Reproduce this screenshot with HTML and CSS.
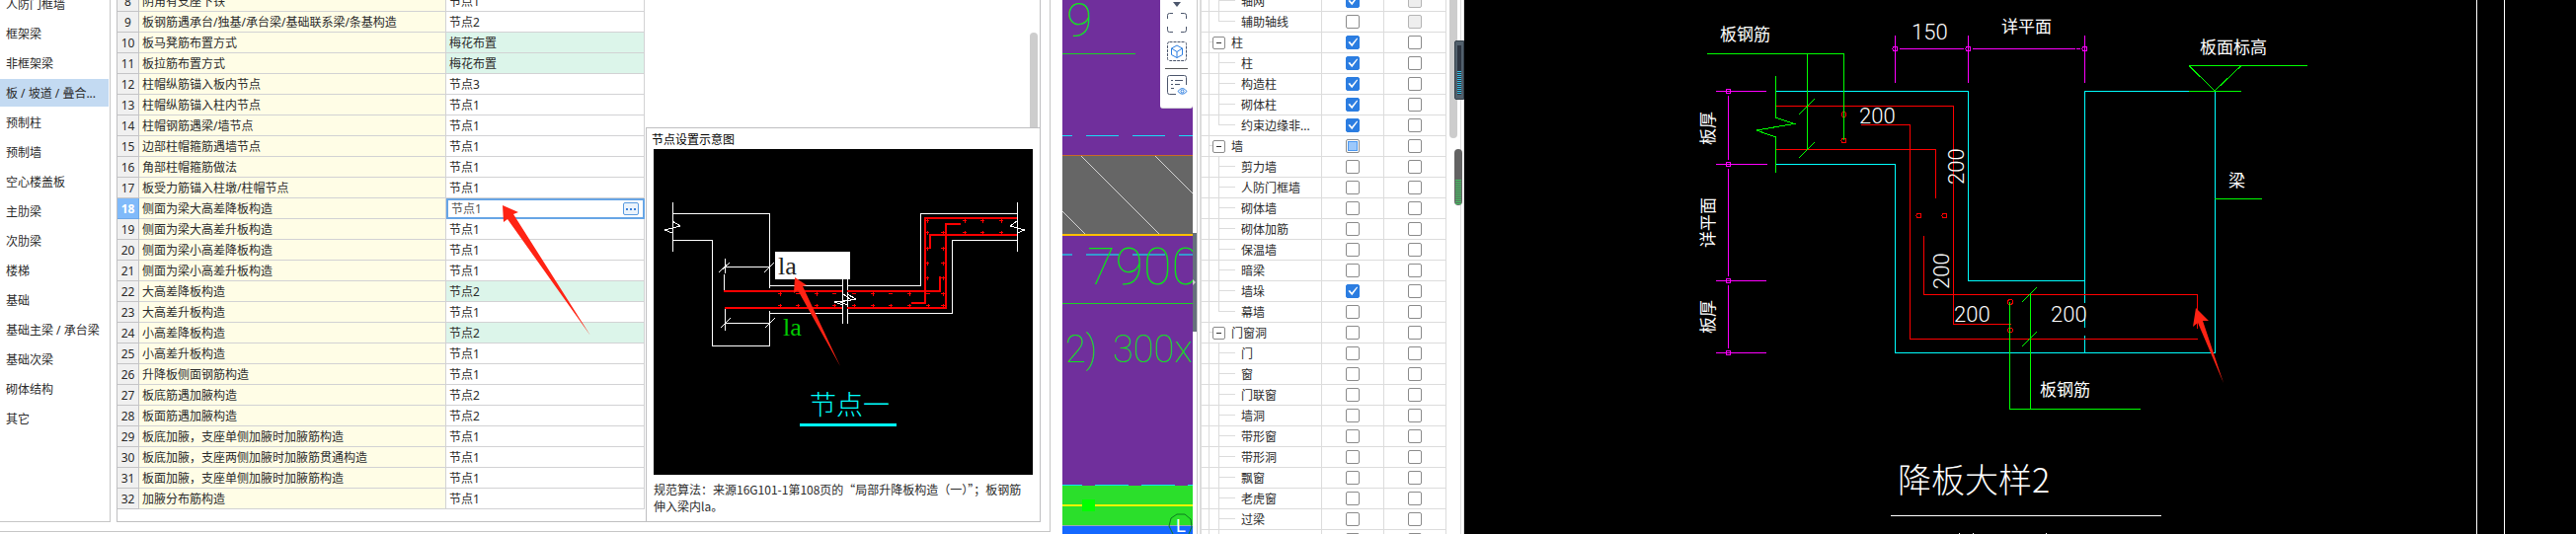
FILE: index.html
```html
<!DOCTYPE html>
<html lang="zh-CN">
<head>
<meta charset="utf-8">
<title>节点设置</title>
<link rel="stylesheet" href="styles.css">
</head>
<body>
<main class="workspace">
  <section class="settings">
    <nav class="categories">
      <ul>
        <li><a href="#">人防门框墙</a></li>
        <li><a href="#">框架梁</a></li>
        <li><a href="#">非框架梁</a></li>
        <li><a href="#" class="active" aria-current="page">板 / 坡道 / 叠合...</a></li>
        <li><a href="#">预制柱</a></li>
        <li><a href="#">预制墙</a></li>
        <li><a href="#">空心楼盖板</a></li>
        <li><a href="#">主肋梁</a></li>
        <li><a href="#">次肋梁</a></li>
        <li><a href="#">楼梯</a></li>
        <li><a href="#">基础</a></li>
        <li><a href="#">基础主梁 / 承台梁</a></li>
        <li><a href="#">基础次梁</a></li>
        <li><a href="#">砌体结构</a></li>
        <li><a href="#">其它</a></li>
      </ul>
    </nav>
    <div class="detail">
      <div class="rules-wrap">
        <table class="rules">
          <tbody>
            <tr><th>8</th><td>阴角有支座下铁</td><td>节点1</td></tr>
            <tr><th>9</th><td>板钢筋遇承台/独基/承台梁/基础联系梁/条基构造</td><td>节点2</td></tr>
            <tr class="changed"><th>10</th><td>板马凳筋布置方式</td><td>梅花布置</td></tr>
            <tr class="changed"><th>11</th><td>板拉筋布置方式</td><td>梅花布置</td></tr>
            <tr><th>12</th><td>柱帽纵筋锚入板内节点</td><td>节点3</td></tr>
            <tr><th>13</th><td>柱帽纵筋锚入柱内节点</td><td>节点1</td></tr>
            <tr><th>14</th><td>柱帽钢筋遇梁/墙节点</td><td>节点1</td></tr>
            <tr><th>15</th><td>边部柱帽箍筋遇墙节点</td><td>节点1</td></tr>
            <tr><th>16</th><td>角部柱帽箍筋做法</td><td>节点1</td></tr>
            <tr><th>17</th><td>板受力筋锚入柱墩/柱帽节点</td><td>节点1</td></tr>
            <tr class="current"><th>18</th><td>侧面为梁大高差降板构造</td><td><div class="editor"><input type="text" value="节点1" aria-label="侧面为梁大高差降板构造"><button type="button" aria-label="更多"><i></i><i></i><i></i></button></div></td></tr>
            <tr><th>19</th><td>侧面为梁大高差升板构造</td><td>节点1</td></tr>
            <tr><th>20</th><td>侧面为梁小高差降板构造</td><td>节点1</td></tr>
            <tr><th>21</th><td>侧面为梁小高差升板构造</td><td>节点1</td></tr>
            <tr class="changed"><th>22</th><td>大高差降板构造</td><td>节点2</td></tr>
            <tr><th>23</th><td>大高差升板构造</td><td>节点1</td></tr>
            <tr class="changed"><th>24</th><td>小高差降板构造</td><td>节点2</td></tr>
            <tr><th>25</th><td>小高差升板构造</td><td>节点1</td></tr>
            <tr><th>26</th><td>升降板侧面钢筋构造</td><td>节点1</td></tr>
            <tr><th>27</th><td>板底筋遇加腋构造</td><td>节点2</td></tr>
            <tr><th>28</th><td>板面筋遇加腋构造</td><td>节点2</td></tr>
            <tr><th>29</th><td>板底加腋，支座单侧加腋时加腋筋构造</td><td>节点1</td></tr>
            <tr><th>30</th><td>板底加腋，支座两侧加腋时加腋筋贯通构造</td><td>节点1</td></tr>
            <tr><th>31</th><td>板面加腋，支座单侧加腋时加腋筋构造</td><td>节点1</td></tr>
            <tr><th>32</th><td>加腋分布筋构造</td><td>节点1</td></tr>
          </tbody>
        </table>
        <svg class="pointer" viewBox="0 0 90 133" aria-hidden="true"><path d="M0 0 16 7 11 9 89 132 5 14 1 17z" fill="#ff2314"/></svg>
      </div>
      <div class="side">
        <div class="side-scroll"><div class="thumb"></div></div>
        <figure class="preview">
          <h2>节点设置示意图</h2>
          <svg class="preview-drawing" viewBox="662 151 384 330" role="img" aria-label="节点一">
            <rect x="662" y="151" width="384" height="330" fill="#000"/>
            <g class="line" stroke="#fff">
              <path d="M681.500 205V255M681.500 216.500H779.500V292M681.500 243.500H721.500V350.500H779.500V315"/>
              <path d="M681 224 689 229 673 233 681 236"/>
              <path d="M734 270.500H779M728 276 739 266M774 276 784 266M734.500 262V277M733.500 278V295"/>
              <path d="M734 327.500H779M730 332 740 322M775 332 785 322M734.500 312V335"/>
              <path d="M779.500 289.500H853.500M858.500 289.500H932.500V216.500H1030M779.500 317.500H853.500M858.500 317.500H964.500V243.500H1030M1030.500 205V255"/>
              <path d="M1030 224 1023 229 1038 233 1030 236M853.500 283V328M858.500 283V328M853 297 862 304 845 306 854 309M858 298 867 303 851 306 858 309"/>
            </g>
            <g class="line" stroke="#f00" stroke-width="2">
              <path d="M733 295H853M858 295H952V280M734 312H853M858 312H958V227H973M1030 221H937V307H923M1030 238H942V252"/>
            </g>
            <path class="line" stroke="#f00" d="M788 297.500h4m-2-2v4M806 297.500h4M825 297.500h4m-2-2v4M843 297.500h4M863 297.500h4M882 297.500h4m-2-2v4M900 297.500h4M919 297.500h4m-2-2v4M938 297.500h4M953 297.500h4m-2-2v4M788 309.500h4m-2-2v4M806 309.500h4m-2-2v4M825 309.500h4m-2-2v4M843 309.500h4m-2-2v4M863 309.500h4m-2-2v4M882 309.500h4m-2-2v4M900 309.500h4m-2-2v4M919 309.500h4m-2-2v4M938 309.500h4m-2-2v4M953 309.500h4m-2-2v4M937 281.500h4m-2-2v4M953 281.500h4m-2-2v4M937 266.500h4m-2-2v4M953 266.500h4m-2-2v4M937 251.500h4m-2-2v4M953 251.500h4m-2-2v4M937 223.500h4m-2-2v4M937 235.500h4m-2-2v4M953 235.500h4m-2-2v4M975 223.500h4m-2-2v4M975 235.500h4m-2-2v4M993 223.500h4m-2-2v4M993 235.500h4m-2-2v4M1012 223.500h4m-2-2v4M1012 235.500h4m-2-2v4"/>
            <rect x="785" y="255" width="76" height="28" fill="#fff"/>
            <text class="dim-mark" x="788" y="278">la</text>
            <text class="dim-mark green" x="793" y="340">la</text>
            <path d="M805 281 817 289 813 290 851 371 808 294 804 297z" fill="#ff2314"/>
            <text class="drawing-name" x="820" y="420">节点一</text>
            <path d="M810 430.500H908" stroke="#0ff" stroke-width="3"/>
          </svg>
          <figcaption>规范算法：来源16G101-1第108页的“局部升降板构造（一）”；板钢筋伸入梁内la。</figcaption>
        </figure>
      </div>
    </div>
  </section>

  <section class="model">
    <svg class="model-view" viewBox="1076 0 132 541" preserveAspectRatio="xMinYMin slice" role="img" aria-label="模型视图">
      <rect x="1076" width="132" height="541" fill="#702f9c"/>
      <path class="line" d="M1076 137.500H1208" stroke="#18dcf8" stroke-dasharray="33 14" stroke-dashoffset="23"/>
      <rect x="1076" y="158" width="132" height="79" fill="#666"/>
      <path d="M1095 158 1174 237M1170 158 1208 196M1076 214 1099 237" stroke="#d4d4d4"/>
      <path class="line" d="M1076 157.500H1208" stroke="#c96a28"/>
      <path d="M1076 238H1208" stroke="#ffc000" stroke-width="2"/>
      <path d="M1076 258H1208" stroke="#3699d0" stroke-width="2" stroke-dasharray="33 14" stroke-dashoffset="23"/>
      <path class="line" d="M1076 54.500H1150M1076 307.500H1208" stroke="#1bd423"/>
      <g class="cad-number">
        <text x="1080" y="37" font-size="48">9</text>
        <text x="1101" y="288" font-size="52">7900</text>
        <text x="1079" y="367" font-size="38">2)</text>
        <text x="1127" y="367" font-size="38">300x</text>
      </g>
      <rect x="1076" y="492" width="132" height="40" fill="#2bdf2b"/>
      <path class="line" d="M1076 491.500H1208" stroke="#0de4f0" stroke-dasharray="34 13" stroke-dashoffset="14"/>
      <path d="M1076 512H1208" stroke="#f4f400" stroke-width="2"/>
      <rect x="1096" y="506" width="13" height="12" fill="#0f0"/>
      <rect x="1076" y="532" width="132" height="9" fill="#1468ff"/>
      <path class="line" d="M1076 532.500H1208" stroke="#9aa8b8"/>
      <path d="M1192 521 1200 521 1206 526 1207 534 1204 541M1192 521 1186 525 1184 533 1188 541" fill="none" stroke="#0c7c20"/>
      <text class="axis-name" x="1191" y="539">L</text>
    </svg>
    <div class="toolbar">
      <svg class="caret" viewBox="0 0 8 5" aria-hidden="true"><path d="M0 0H8L4 5z" fill="#4c566c"/></svg>
      <button type="button" aria-label="全屏"><svg viewBox="0 0 20 20"><path d="M.5 6V2.500Q.5.5 2.500.5H6M14 .5H17.500Q19.500.5 19.500 2.500V6M19.500 14V17.500Q19.500 19.500 17.500 19.500H14M6 19.500H2.500Q.5 19.500.5 17.500V14"/></svg></button>
      <button type="button" aria-label="三维"><svg viewBox="0 0 20 20"><rect x=".5" y=".5" width="19" height="19" rx="2" stroke-dasharray="3 1"/><path class="accent" d="M10 4 15.500 7V13.500L10 16.500 4.500 13.500V7zM4.500 7 10 10.500 15.500 7M10 10.500V16.500"/></svg></button>
      <hr>
      <button type="button" aria-label="显示设置"><svg viewBox="0 0 20 20"><path d="M9 19.500H2.500Q.5 19.500.5 17.500V2.500Q.5.5 2.500.5H17.500Q19.500.5 19.500 2.500V10M4 5.500H6M8 5.500H16M4 9.500H6M8 9.500H13M4 13.500H7"/><path class="accent" d="M11 16.500Q15.500 10.500 20 16.500 15.500 22 11 16.500z"/><circle class="accent" cx="15.500" cy="16.500" r="1.500"/></svg></button>
    </div>
  </section>

  <div class="splitter"><button type="button" aria-label="折叠"></button></div>

  <section class="layers">
    <table class="tree">
      <tbody>
        <tr><td><label for="n1"><i class="g1"></i><i class="g2"></i>轴网</label></td><td><input id="n1" type="checkbox" checked></td><td><input type="checkbox" aria-label="轴网名称" disabled></td></tr>
        <tr><td><label for="n2"><i class="g1"></i><i class="g2 last"></i>辅助轴线</label></td><td><input id="n2" type="checkbox"></td><td><input type="checkbox" aria-label="辅助轴线名称" disabled></td></tr>
        <tr><td><label for="n3"><i class="g1 stub"></i><b></b>柱</label></td><td><input id="n3" type="checkbox" checked></td><td><input type="checkbox" aria-label="柱分组名称"></td></tr>
        <tr><td><label for="n4"><i class="g1"></i><i class="g2"></i>柱</label></td><td><input id="n4" type="checkbox" checked></td><td><input type="checkbox" aria-label="柱名称"></td></tr>
        <tr><td><label for="n5"><i class="g1"></i><i class="g2"></i>构造柱</label></td><td><input id="n5" type="checkbox" checked></td><td><input type="checkbox" aria-label="构造柱名称"></td></tr>
        <tr><td><label for="n6"><i class="g1"></i><i class="g2"></i>砌体柱</label></td><td><input id="n6" type="checkbox" checked></td><td><input type="checkbox" aria-label="砌体柱名称"></td></tr>
        <tr><td><label for="n7"><i class="g1"></i><i class="g2 last"></i>约束边缘非...</label></td><td><input id="n7" type="checkbox" checked></td><td><input type="checkbox" aria-label="约束边缘名称"></td></tr>
        <tr><td><label for="n8"><i class="g1 stub"></i><b></b>墙</label></td><td><input id="n8" type="checkbox" class="mixed"></td><td><input type="checkbox" aria-label="墙名称"></td></tr>
        <tr><td><label for="n9"><i class="g1"></i><i class="g2"></i>剪力墙</label></td><td><input id="n9" type="checkbox"></td><td><input type="checkbox" aria-label="剪力墙名称"></td></tr>
        <tr><td><label for="n10"><i class="g1"></i><i class="g2"></i>人防门框墙</label></td><td><input id="n10" type="checkbox"></td><td><input type="checkbox" aria-label="人防门框墙名称"></td></tr>
        <tr><td><label for="n11"><i class="g1"></i><i class="g2"></i>砌体墙</label></td><td><input id="n11" type="checkbox"></td><td><input type="checkbox" aria-label="砌体墙名称"></td></tr>
        <tr><td><label for="n12"><i class="g1"></i><i class="g2"></i>砌体加筋</label></td><td><input id="n12" type="checkbox"></td><td><input type="checkbox" aria-label="砌体加筋名称"></td></tr>
        <tr><td><label for="n13"><i class="g1"></i><i class="g2"></i>保温墙</label></td><td><input id="n13" type="checkbox"></td><td><input type="checkbox" aria-label="保温墙名称"></td></tr>
        <tr><td><label for="n14"><i class="g1"></i><i class="g2"></i>暗梁</label></td><td><input id="n14" type="checkbox"></td><td><input type="checkbox" aria-label="暗梁名称"></td></tr>
        <tr><td><label for="n15"><i class="g1"></i><i class="g2"></i>墙垛</label></td><td><input id="n15" type="checkbox" checked></td><td><input type="checkbox" aria-label="墙垛名称"></td></tr>
        <tr><td><label for="n16"><i class="g1"></i><i class="g2 last"></i>幕墙</label></td><td><input id="n16" type="checkbox"></td><td><input type="checkbox" aria-label="幕墙名称"></td></tr>
        <tr><td><label for="n17"><i class="g1 stub"></i><b></b>门窗洞</label></td><td><input id="n17" type="checkbox"></td><td><input type="checkbox" aria-label="门窗洞名称"></td></tr>
        <tr><td><label for="n18"><i class="g1"></i><i class="g2"></i>门</label></td><td><input id="n18" type="checkbox"></td><td><input type="checkbox" aria-label="门名称"></td></tr>
        <tr><td><label for="n19"><i class="g1"></i><i class="g2"></i>窗</label></td><td><input id="n19" type="checkbox"></td><td><input type="checkbox" aria-label="窗名称"></td></tr>
        <tr><td><label for="n20"><i class="g1"></i><i class="g2"></i>门联窗</label></td><td><input id="n20" type="checkbox"></td><td><input type="checkbox" aria-label="门联窗名称"></td></tr>
        <tr><td><label for="n21"><i class="g1"></i><i class="g2"></i>墙洞</label></td><td><input id="n21" type="checkbox"></td><td><input type="checkbox" aria-label="墙洞名称"></td></tr>
        <tr><td><label for="n22"><i class="g1"></i><i class="g2"></i>带形窗</label></td><td><input id="n22" type="checkbox"></td><td><input type="checkbox" aria-label="带形窗名称"></td></tr>
        <tr><td><label for="n23"><i class="g1"></i><i class="g2"></i>带形洞</label></td><td><input id="n23" type="checkbox"></td><td><input type="checkbox" aria-label="带形洞名称"></td></tr>
        <tr><td><label for="n24"><i class="g1"></i><i class="g2"></i>飘窗</label></td><td><input id="n24" type="checkbox"></td><td><input type="checkbox" aria-label="飘窗名称"></td></tr>
        <tr><td><label for="n25"><i class="g1"></i><i class="g2"></i>老虎窗</label></td><td><input id="n25" type="checkbox"></td><td><input type="checkbox" aria-label="老虎窗名称"></td></tr>
        <tr><td><label for="n26"><i class="g1"></i><i class="g2"></i>过梁</label></td><td><input id="n26" type="checkbox"></td><td><input type="checkbox" aria-label="过梁名称"></td></tr>
        <tr><td><label for="n27"><i class="g1"></i><i class="g2"></i></label></td><td><input id="n27" type="checkbox"></td><td><input type="checkbox"></td></tr>
      </tbody>
    </table>
    <div class="layers-scroll"><div class="thumb"></div></div>
    <div class="meter"><span></span></div>
    <div class="meter level"><span></span></div>
  </section>

  <section class="cad">
    <svg viewBox="1483 0 1126 541" preserveAspectRatio="xMinYMin meet" role="img" aria-label="降板大样2">
      <g class="line" stroke="#0ff">
        <path d="M1799 92.500H1993.500V284.500H2111.500M1799 166.500H1919.500V357.500H2243.500V92.500M2217 92.500H2111.500V307M2111.500 314V332M2111.500 340V357"/>
      </g>
      <g class="line" stroke="#f00">
        <path d="M1799 107.500H1978.500V328.500H2037M1799 151.500H1960.500V201M1885 126.500H1934.500V343.500H2226M1948.500 239V298.500H2225.500V333"/>
        <circle cx="1867.500" cy="116" r="2.500"/><circle cx="1867.500" cy="142.500" r="2.500"/>
        <circle cx="1943.500" cy="218.500" r="2.500"/><circle cx="1969.500" cy="218.500" r="2.500"/>
        <circle cx="2036" cy="306" r="2.500"/><circle cx="2036" cy="334.500" r="2.500"/>
      </g>
      <g class="line" stroke="#0f0">
        <path d="M1729 54.500H1867.500V142M1830.500 54V152M1822 116 1838 100M1822 160 1838 144M1798.500 77V119L1817 125.500 1779 132 1798.500 139V175"/>
        <path d="M2217 66.500H2337M2217 66.500 2243 92 2270 66.500M2217 92.500H2270M2243 201.500H2291M2056.500 298V414M2035.500 306V414.500H2168M2048 306 2063 291M2048 351 2063 336"/>
      </g>
      <g class="line" stroke="#f0f">
        <path d="M1750.500 97V162M1750.500 171V280M1750.500 289V353M1738 92.500H1789M1738 166.500H1790M1738 284.500H1789M1738 357.500H1789"/>
        <path d="M1924 49.500H1989M1998 49.500H2102M2103 49.500H2107M1919.500 36V84M1993.500 36V84M2111.500 36V84"/>
        <circle cx="1750.500" cy="92.500" r="2.500"/><circle cx="1750.500" cy="166.500" r="2.500"/><circle cx="1750.500" cy="284.500" r="2.500"/><circle cx="1750.500" cy="357.500" r="2.500"/>
        <circle cx="1919.500" cy="49.500" r="2.500"/><circle cx="1993.500" cy="49.500" r="2.500"/><circle cx="2111.500" cy="49.500" r="2.500"/>
      </g>
      <path class="line" stroke="#fff" d="M2508.500 0V541M2536.500 0V541M1915 522.500H2189M1984 540.500h1M1998 540.500h1M2072 540.500h1"/>
      <g class="cad-text">
        <text x="1742" y="41">板钢筋</text>
        <text x="2027" y="33">详平面</text>
        <text x="2228" y="54">板面标高</text>
        <text x="2257" y="189">梁</text>
        <text x="2066" y="401">板钢筋</text>
        <text transform="translate(1736 147) rotate(-90)">板厚</text>
        <text transform="translate(1736 251) rotate(-90)">详平面</text>
        <text transform="translate(1736 338) rotate(-90)">板厚</text>
      </g>
      <g class="cad-dim">
        <text x="1936" y="40">150</text>
        <text x="1883" y="125">200</text>
        <text x="1979" y="326">200</text>
        <text x="2077" y="326">200</text>
        <text transform="translate(1989 187) rotate(-90)">200</text>
        <text transform="translate(1974 293) rotate(-90)">200</text>
      </g>
      <text class="cad-title" x="1922" y="499">降板大样2</text>
      <path d="M2224 312 2237 325 2231 325 2252 388 2226 327 2221 331z" fill="#ff2314"/>
    </svg>
  </section>
</main>
</body>
</html>
```
FILE: styles.css
```css
* { box-sizing: border-box; }
body {
  margin: 0;
  background: #fff;
  color: #2b2b2b;
  font: 12px/20px "Noto Sans", "Noto Sans CJK SC", sans-serif;
}
.workspace { display: flex; height: 100vh; overflow: hidden; }
button { padding: 0; border: 0; background: none; }
.line { fill: none; shape-rendering: crispEdges; }

/* settings */
.settings {
  display: flex;
  flex: none;
  width: 1064px;
  margin: 0 12px 2px 0;
  padding: 0 9px 9px 0;
  border: solid #c6c6c6;
  border-width: 0 1px 1px 0;
}
.categories {
  flex: none;
  width: 112px;
  margin-right: 6px;
  overflow: hidden;
  border: solid #c6c6c6;
  border-width: 0 1px 1px 0;
}
.categories ul { margin: -10px 1px 0 0; padding: 0; list-style: none; }
.categories a {
  display: block;
  height: 28px;
  margin-bottom: 2px;
  padding-left: 6px;
  color: inherit;
  line-height: 30px;
  text-decoration: none;
  white-space: nowrap;
}
.categories .active { background: #c3daf2; }
.detail {
  display: flex;
  flex: 1;
  overflow: hidden;
  border: solid #bfbfc1;
  border-width: 0 1px 1px;
}
.rules-wrap { position: relative; flex: none; width: 535px; }
.rules {
  width: 534px;
  margin-top: -9px;
  border-spacing: 0;
  table-layout: fixed;
}
.rules th, .rules td {
  height: 21px;
  padding: 2px 0 0 3px;
  border: solid #d2d2d4;
  border-width: 0 1px 1px 0;
  line-height: 18px;
  text-align: left;
  white-space: nowrap;
}
.rules th {
  width: 22px;
  padding: 2px 0 0;
  background: #f0f0f0;
  border-color: #c4c4c6;
  font-weight: 400;
  text-align: center;
}
.rules td:nth-child(2) { width: 311px; background: #fffde6; }
.rules .changed td:last-child { background: #dcf5ea; }
.rules .current th { background: #80bafa; border-color: #6ea8e8; color: #fff; font-weight: 700; }
.rules .current td:last-child { padding: 0; border: 0; }
.editor {
  display: flex;
  align-items: center;
  height: 21px;
  padding: 0 4px 0 3px;
  border: 2px solid #67a5e5;
  background: #fff;
}
.editor input {
  flex: 1;
  min-width: 0;
  height: 17px;
  padding: 0;
  border: 0;
  color: #555;
  font: inherit;
}
.editor button {
  display: flex;
  justify-content: center;
  align-items: center;
  gap: 2px;
  width: 16px;
  height: 13px;
  border: 1px solid #5a9be0;
  border-radius: 2px;
  background: #eaf3fc;
}
.editor i { width: 2px; height: 2px; background: #3a7fd8; }
.pointer { position: absolute; top: 208px; left: 390px; width: 90px; height: 133px; }

.side { display: flex; flex: 1; flex-direction: column; }
.side-scroll { height: 129px; padding: 33px 2px 0; }
.thumb { width: 8px; background: #cdcdcd; }
.side-scroll .thumb { height: 96px; margin-left: auto; border-radius: 4px 4px 0 0; }
.preview {
  flex: 1;
  margin: 0;
  padding: 0 7px;
  border: solid #bfbfc1;
  border-width: 1px 0 0 1px;
}
.preview h2 { margin: 0 0 0 -2px; color: #000; font-size: 12px; font-weight: 400; line-height: 24px; height: 21px; }
.preview-drawing { display: block; width: 100%; }
.preview figcaption { padding-top: 6px; font-family: "Noto Sans CJK SC", sans-serif; line-height: 17px; }
.dim-mark { font: 26px "Liberation Serif", serif; fill: #222; }
.dim-mark.green { fill: #0c0; }
.drawing-name { font: 300 27px "Noto Sans CJK SC", sans-serif; fill: #0ff; }

/* model view */
.model { position: relative; flex: none; width: 132px; }
.model-view { display: block; width: 100%; height: 100%; }
.cad-number { font-family: Roboto, sans-serif; font-weight: 100; fill: #0de41b; }
.axis-name { font: 18px "Liberation Sans", sans-serif; fill: #fff; }
.toolbar {
  position: absolute;
  top: 0;
  right: 0;
  display: flex;
  flex-direction: column;
  align-items: center;
  width: 33px;
  height: 110px;
  padding-top: 2px;
  border-bottom: 1px solid #d4d4d8;
  border-radius: 0 0 3px 3px;
  background: #fff;
}
.toolbar button { width: 20px; height: 20px; margin-bottom: 9px; }
.toolbar button svg { display: block; width: 20px; overflow: visible; fill: none; stroke: #4c566c; }
.toolbar .accent { stroke: #2b7de1; }
.caret { width: 8px; height: 5px; margin-bottom: 6px; }
.toolbar hr { width: 23px; margin: -2px 0 6px; border: 0; border-top: 1px solid #555; }
.splitter { flex: none; width: 5px; padding-top: 236px; border-right: 1px solid #c8c8c8; }
.splitter button { display: flex; align-items: center; width: 4px; height: 100px; background: #66707c; }
.splitter button::before { content: ""; border: solid transparent; border-width: 3px 0 3px 3px; border-left-color: #ccc; }

/* layer tree */
.layers {
  position: relative;
  display: flex;
  flex: none;
  width: 268px;
  margin-left: 2px;
  border: solid #dcdcdc;
  border-width: 0 1px 0 2px;
}
.tree { flex: none; width: 248px; height: 0; margin-top: -9px; border-spacing: 0; table-layout: fixed; }
.tree td { height: 21px; padding: 0; border: solid #dcdcdc; border-width: 0 1px 1px 0; text-align: center; }
.tree td:first-child { width: 122px; }
.tree label { display: flex; align-items: flex-start; height: 20px; line-height: 22px; white-space: nowrap; }
.tree i { flex: none; height: 20px; border-left: 1px solid #dcdcdc; }
.g1 { width: 10px; margin-left: 7px; }
.g1.stub { width: 4px; background: linear-gradient(#dcdcdc, #dcdcdc) 0 9px / 4px 1px no-repeat; }
.g2 { width: 17px; margin-right: 6px; background: linear-gradient(#dcdcdc, #dcdcdc) 0 9px / 17px 1px no-repeat; }
.tree .g2.last { height: 10px; }
.tree b {
  display: grid;
  place-content: center;
  width: 13px;
  height: 13px;
  margin: 4px 6px 0 0;
  border: 1px solid #8b8b8b;
  border-radius: 2px;
  background: #fff;
}
.tree b::before { content: ""; width: 5px; height: 1px; background: #333; }
.tree input {
  appearance: none;
  display: grid;
  width: 14px;
  height: 14px;
  margin: 0 auto;
  border: 1px solid #8b8b8b;
  border-radius: 2px;
  background: #fff;
}
.tree input:disabled { border-color: #b4b4b4; background: #eee; }
.tree input:checked { border-color: #2b7de1; background: #2b7de1; }
.tree input:checked::before {
  content: "";
  background: #fff;
  clip-path: polygon(12% 48%, 26% 42%, 42% 62%, 86% 12%, 92% 18%, 44% 86%);
}
.tree .mixed::before { content: ""; margin: 1px; border: 1px solid #4a97f0; background: #9cc8fb; }
.layers-scroll { width: 15px; padding-left: 3px; border-right: 1px solid #dcdcdc; }
.layers-scroll .thumb { height: 140px; border-radius: 0 0 4px 4px; }
.meter {
  position: absolute;
  top: 41px;
  right: -1px;
  width: 10px;
  height: 60px;
  padding: 4px 3px;
  border: 1px solid #35404a;
  border-radius: 2px 0 0 2px;
  background: #52606c;
}
.meter span {
  display: block;
  height: 100%;
  margin: 0 -1px;
  background: linear-gradient(#2c3440 50%, transparent 50%), repeating-linear-gradient(#35c0e8 0 1px, #2c3440 1px 2px);
}
.meter.level { top: 151px; right: 1px; width: 8px; height: 57px; padding: 31px 1px 1px; border: 0; border-radius: 4px; background: #636363; }
.meter.level span { margin: 0; background: repeating-linear-gradient(#3fc860 0 1px, #636363 1px 2px); }

/* CAD sheet */
.cad { flex: 1; min-width: 0; background: #000; }
.cad svg { display: block; width: 100%; }
.cad-text { font: 17px "Noto Sans CJK SC", sans-serif; fill: #fff; }
.cad-dim { font: 300 22px Roboto, sans-serif; fill: #fff; }
.cad-title { font: 300 34px "Noto Sans CJK SC", sans-serif; fill: #fff; }
```
